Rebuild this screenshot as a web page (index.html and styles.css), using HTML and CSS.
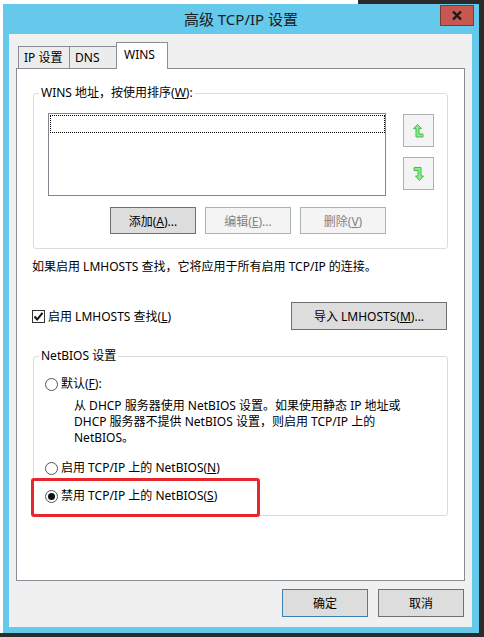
FILE: index.html
```html
<html>
<head>
    <title>高级 TCP/IP 设置</title>
    <link rel="stylesheet" href="styles.css">
</head>
<body>
    <div class="window">
        <div class="titlebar">
            <span></span>
            <span class="title">高级 TCP/IP 设置</span>
            <button class="close" type="button">
                <svg width="10" height="9" viewBox="0 0 10 9">
                    <path d="M1 0.5 L9 8.5 M9 0.5 L1 8.5" stroke="#1a1a1a" stroke-width="2.4"/>
                </svg>
            </button>
        </div>

        <div class="client">
            <div class="tabs">
                <div class="tab">IP 设置</div>
                <div class="tab">DNS</div>
                <div class="tab active">WINS</div>
            </div>

            <div class="panel">
                <fieldset class="group wins">
                    <legend>WINS 地址，按使用排序(<u>W</u>):</legend>
                    <div class="list-row">
                        <div class="listbox">
                            <div class="focus-item"></div>
                        </div>
                        <div class="order-btns">
                            <button class="btn icon-btn" type="button">
                                <svg width="11" height="14" viewBox="0 0 11 14">
                                    <path d="M4.5 0.5 L8.5 4.5 L6 4.5 L6 10 L10 10 L10 13 L3 13 L3 4.5 L0.5 4.5 Z" fill="#8be88b" stroke="#45c04f" stroke-width="1"/>
                                </svg>
                            </button>
                            <button class="btn icon-btn" type="button">
                                <svg width="11" height="14" viewBox="0 0 11 14">
                                    <path d="M1 0.5 L8 0.5 L8 9 L10.5 9 L6.5 13.5 L2.5 9 L5 9 L5 3.5 L1 3.5 Z" fill="#8be88b" stroke="#45c04f" stroke-width="1"/>
                                </svg>
                            </button>
                        </div>
                    </div>
                    <div class="action-row">
                        <button class="btn" type="button">添加(<u>A</u>)...</button>
                        <button class="btn disabled" type="button">编辑(<u>E</u>)...</button>
                        <button class="btn disabled" type="button">删除(<u>V</u>)</button>
                    </div>
                </fieldset>

                <p class="note">如果启用 LMHOSTS 查找，它将应用于所有启用 TCP/IP 的连接。</p>

                <div class="lmhosts-row">
                    <label class="check">
                        <span class="checkbox">
                            <svg width="11" height="11" viewBox="0 0 11 11">
                                <path d="M1.5 5.5 L4.2 8.5 L9.5 1.8" fill="none" stroke="#111" stroke-width="2"/>
                            </svg>
                        </span>
                        <span>启用 LMHOSTS 查找(<u>L</u>)</span>
                    </label>
                    <button class="btn import" type="button">导入 LMHOSTS(<u>M</u>)...</button>
                </div>

                <fieldset class="group netbios">
                    <legend>NetBIOS 设置</legend>
                    <div class="radio-row first">
                        <span class="radio"></span>
                        <span>默认(<u>F</u>):</span>
                    </div>
                    <p class="desc">从 DHCP 服务器使用 NetBIOS 设置。如果使用静态 IP 地址或<br>DHCP 服务器不提供 NetBIOS 设置，则启用 TCP/IP 上的<br>NetBIOS。</p>
                    <div class="radio-row second">
                        <span class="radio"></span>
                        <span>启用 TCP/IP 上的 NetBIOS(<u>N</u>)</span>
                    </div>
                    <div class="radio-row third">
                        <span class="radio checked"></span>
                        <span>禁用 TCP/IP 上的 NetBIOS(<u>S</u>)</span>
                        <span class="highlight"></span>
                    </div>
                </fieldset>
            </div>

            <div class="footer">
                <button class="btn default" type="button">确定</button>
                <button class="btn" type="button">取消</button>
            </div>
        </div>
    </div>
</body>
</html>
```

FILE: styles.css
```css
body {
    margin: 0;
    width: 484px;
    height: 637px;
    overflow: hidden;
    font-family: "Noto Sans", "Noto Sans CJK SC", sans-serif;
    font-size: 12px;
    color: #000;
    background:
        linear-gradient(to bottom, transparent 633px, #2b2b2b 633px),
        linear-gradient(to right, #ffffff 358px, #2b2b2b 358px);
}
.window {
    margin: 4px 0 0 3px;
    width: 476px;
    height: 629px;
    background: #64c9ea;
}
.titlebar {
    height: 30px;
    display: grid;
    grid-template-columns: 1fr auto 1fr;
    align-items: start;
}
.title {
    font-size: 15px;
    line-height: 30px;
    color: #1b1b1b;
}
.close {
    justify-self: end;
    margin: 1px 5px 0 0;
    width: 34px;
    height: 21px;
    padding: 0;
    border: 1px solid #7a3a35;
    background: #c75851;
    display: flex;
    align-items: center;
    justify-content: center;
}
.client {
    margin: 0 7px 0 6px;
    height: 593px;
    box-sizing: border-box;
    padding: 9px 7px 0 7px;
    background: #f0f0f0;
}
.tabs {
    height: 25px;
    display: flex;
    align-items: flex-end;
    padding-left: 2px;
}
.tab {
    height: 22px;
    box-sizing: border-box;
    border: 1px solid #898c95;
    border-bottom: none;
    margin-right: -1px;
    padding: 0 5px;
    line-height: 22px;
    background: #ececec;
}
.tab:first-child {
    width: 52px;
}
.tab:nth-child(2) {
    width: 48px;
}
.tab.active {
    width: 52px;
    height: 27px;
    margin-bottom: -1px;
    position: relative;
    z-index: 1;
    background: #fff;
    line-height: 24px;
    padding-left: 7px;
}
.panel {
    height: 513px;
    box-sizing: border-box;
    border: 1px solid #898c95;
    background: #fff;
    padding: 16px 16px 0 16px;
}
.group {
    margin: 0;
    min-width: 0;
    border: 1px solid #dcdcdc;
    border-radius: 3px;
    padding: 12px 14px 14px 5px;
}
.group legend {
    padding: 0 2px;
    line-height: 16px;
}
.list-row {
    display: flex;
    gap: 17px;
    margin-left: 9px;
}
.listbox {
    width: 338px;
    height: 83px;
    box-sizing: border-box;
    border: 1px solid #828790;
    padding: 1px 0 0 1px;
}
.focus-item {
    width: 335px;
    height: 18px;
    box-sizing: border-box;
    border: 1px dotted #000;
}
.order-btns {
    display: flex;
    flex-direction: column;
    gap: 10px;
    margin-top: 1px;
}
.btn {
    height: 27px;
    width: 86px;
    padding: 0;
    border: 1px solid #707070;
    background: #dddddd;
    font-family: inherit;
    font-size: 12px;
    color: #000;
}
.btn.disabled {
    background: #f4f4f4;
    border-color: #adb2b5;
    color: #838383;
}
.icon-btn {
    width: 31px;
    height: 33px;
    background: #f4f4f4;
    border-color: #adb2b5;
    display: flex;
    align-items: center;
    justify-content: center;
}
.action-row {
    width: 338px;
    margin: 11px 0 0 9px;
    display: flex;
    justify-content: flex-end;
    gap: 9px;
}
.note {
    margin: 10px 0 0 -1px;
    line-height: 16px;
}
.lmhosts-row {
    margin: 27px 1px 0 -1px;
    display: flex;
    align-items: center;
    justify-content: space-between;
}
.check {
    display: flex;
    align-items: center;
    gap: 3px;
}
.checkbox {
    width: 13px;
    height: 13px;
    box-sizing: border-box;
    border: 1px solid #333;
    background: #fff;
    display: flex;
    align-items: center;
    justify-content: center;
}
.btn.import {
    width: 156px;
    height: 28px;
}
.netbios {
    margin-top: 18px;
    padding: 12px 14px 11px 5px;
}
.radio-row {
    margin-left: 6px;
    line-height: 16px;
    display: flex;
    align-items: center;
    gap: 3px;
}
.radio {
    width: 13px;
    height: 13px;
    box-sizing: border-box;
    border: 1px solid #555;
    border-radius: 50%;
    background: #fff;
    display: flex;
    align-items: center;
    justify-content: center;
}
.radio.checked::after {
    content: "";
    width: 7px;
    height: 7px;
    border-radius: 50%;
    background: #111;
}
.desc {
    margin: 6px 0 0 35px;
    line-height: 16px;
}
.radio-row.second {
    margin-top: 14px;
}
.radio-row.third {
    margin-top: 12px;
    position: relative;
}
.highlight {
    position: absolute;
    left: -14px;
    top: -10px;
    width: 229px;
    height: 39px;
    box-sizing: border-box;
    border: 3px solid #e8262b;
    border-radius: 3px;
}
.footer {
    margin-top: 8px;
    padding-right: 1px;
    display: flex;
    justify-content: flex-end;
    gap: 10px;
}
.footer .btn {
    height: 28px;
}
.btn.default {
    border-color: #3c7fb1;
}
```
